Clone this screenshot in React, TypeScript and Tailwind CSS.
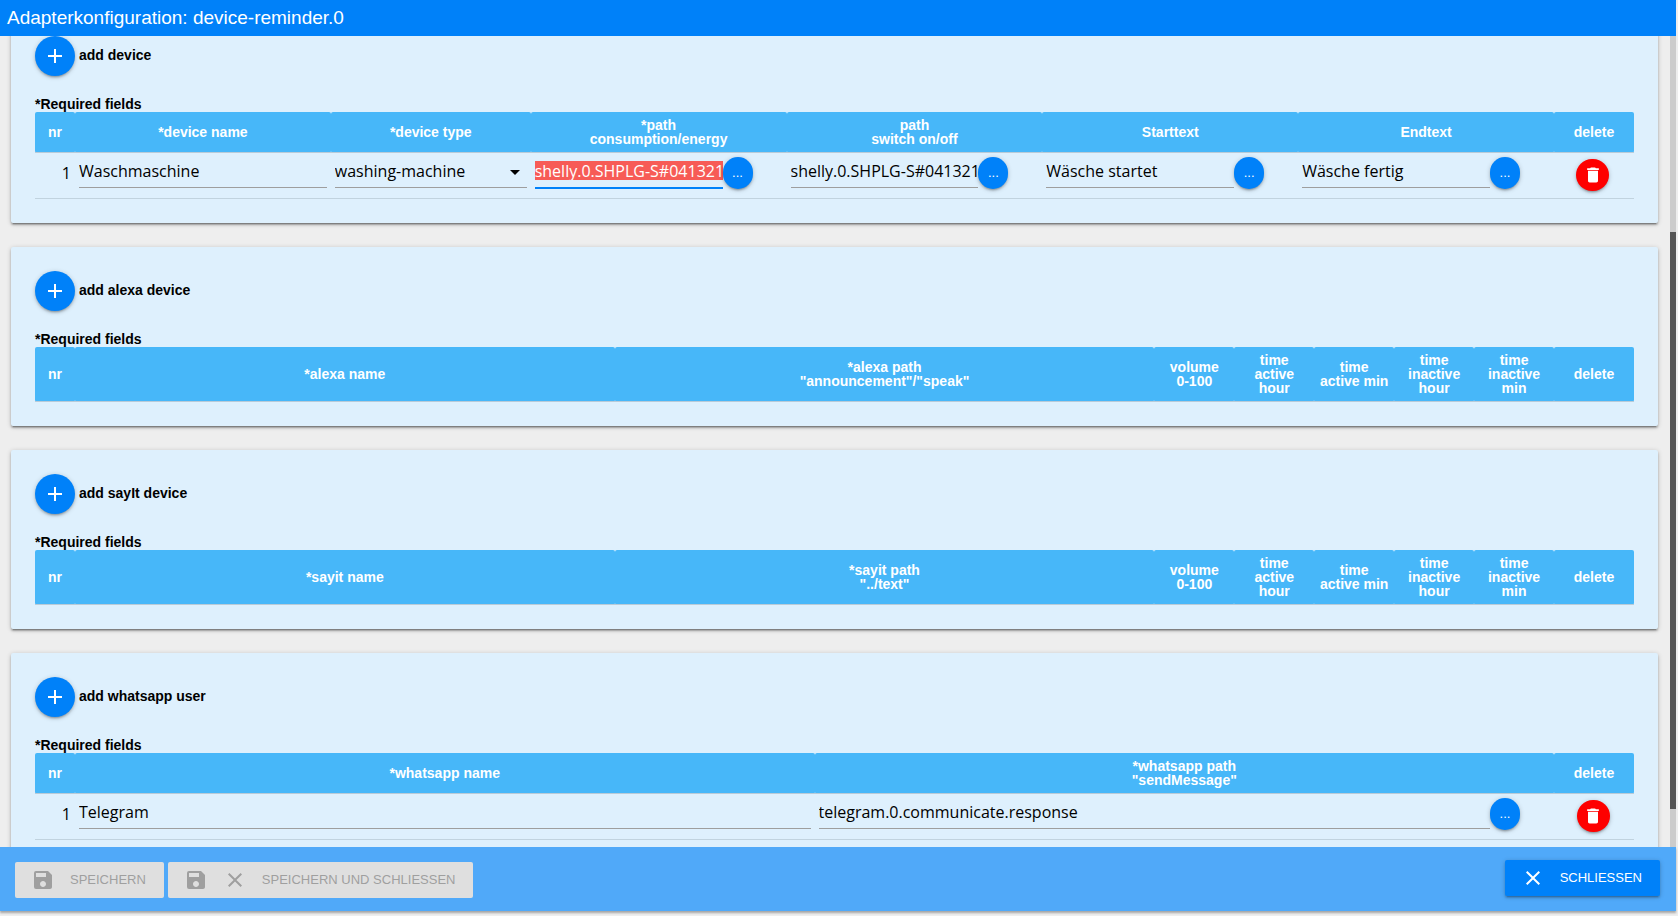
import React from 'react';
import { MdAdd, MdClose, MdDelete, MdSave, MdArrowDropDown } from 'react-icons/md';

interface Column {
    label: string[];
    width: string;
}

const NR: Column = { label: ['nr'], width: 'w-[2.5%]' };
const DELETE: Column = { label: ['delete'], width: 'w-[5%]' };

const TIME_COLUMNS: Column[] = [
    { label: ['volume', '0-100'], width: 'w-[5%]' },
    { label: ['time', 'active', 'hour'], width: 'w-[5%]' },
    { label: ['time', 'active min'], width: 'w-[5%]' },
    { label: ['time', 'inactive', 'hour'], width: 'w-[5%]' },
    { label: ['time', 'inactive', 'min'], width: 'w-[5%]' },
];

const deviceColumns: Column[] = [
    NR,
    { label: ['*device name'], width: 'w-[16%]' },
    { label: ['*device type'], width: 'w-[12.5%]' },
    { label: ['*path', 'consumption/energy'], width: 'w-[16%]' },
    { label: ['path', 'switch on/off'], width: 'w-[16%]' },
    { label: ['Starttext'], width: 'w-[16%]' },
    { label: ['Endtext'], width: 'w-[16%]' },
    DELETE,
];

const alexaColumns: Column[] = [
    NR,
    { label: ['*alexa name'], width: 'w-[33.75%]' },
    { label: ['*alexa path', '"announcement"/"speak"'], width: 'w-[33.75%]' },
    ...TIME_COLUMNS,
    DELETE,
];

const sayitColumns: Column[] = [
    NR,
    { label: ['*sayit name'], width: 'w-[33.75%]' },
    { label: ['*sayit path', '"../text"'], width: 'w-[33.75%]' },
    ...TIME_COLUMNS,
    DELETE,
];

const whatsappColumns: Column[] = [
    NR,
    { label: ['*whatsapp name'], width: 'w-[46.25%]' },
    { label: ['*whatsapp path', '"sendMessage"'], width: 'w-[46.25%]' },
    DELETE,
];

const fieldClass = 'h-8 border-b border-[#9e9e9e] bg-transparent pb-0.5 outline-none';
const buttonShadow = 'shadow-[0_2px_2px_0_rgba(0,0,0,0.14),0_3px_1px_-2px_rgba(0,0,0,0.12),0_1px_5px_0_rgba(0,0,0,0.2)]';

const Section: React.FC<{ title: string; columns: Column[]; children?: React.ReactNode }> = ({ title, columns, children }) => (
    <section className="rounded-xs bg-[#def0fd] p-6 shadow-[0_2px_2px_0_rgba(0,0,0,0.24),0_3px_1px_-2px_rgba(0,0,0,0.22),0_1px_5px_0_rgba(0,0,0,0.2)]">
        <div className="flex items-center gap-1">
            <button type="button" aria-label={title} className={`flex size-10 items-center justify-center rounded-full bg-[#0081f9] text-white ${buttonShadow}`}>
                <MdAdd size={24} />
            </button>
            <span className="pb-0.5 text-sm font-bold">{title}</span>
        </div>
        <p className="pt-5 text-sm/4 font-bold">*Required fields</p>
        <table className="w-full table-fixed border-collapse">
            <thead>
                <tr className="border-b border-[#b9cbd8]">
                    {columns.map(col => (
                        <th key={col.label.join(' ')} className={`${col.width} rounded-xs bg-[#47b7f9] py-1.5 text-sm/[14px] font-bold text-white`}>
                            {col.label.map(line => (
                                <span key={line} className="block whitespace-nowrap">{line}</span>
                            ))}
                        </th>
                    ))}
                </tr>
            </thead>
            {children && <tbody>{children}</tbody>}
        </table>
    </section>
);

const Row: React.FC<{ nr: number; children: React.ReactNode }> = ({ nr, children }) => (
    <tr className="h-[46px] border-b border-[#c1d3df] align-top font-['Open_Sans',sans-serif] text-base">
        <td className="px-1 pt-2 text-right">{nr}</td>
        {children}
        <td className="pt-1.5 pr-1.5 pl-1">
            <button type="button" aria-label="delete" className={`mx-auto flex h-8 w-[33px] items-center justify-center rounded-full bg-[#fe0000] text-white ${buttonShadow}`}>
                <MdDelete size={20} />
            </button>
        </td>
    </tr>
);

const TextCell: React.FC<{ label: string; value: string }> = ({ label, value }) => (
    <td className="px-1 pt-[3px]">
        <input type="text" aria-label={label} defaultValue={value} className={`block w-full ${fieldClass}`} />
    </td>
);

const PickerCell: React.FC<{ label: string; value: string; active?: boolean }> = ({ label, value, active }) => (
    <td className="px-1 pt-[3px]">
        <div className="flex">
            {active ? (
                <div className="flex h-[33px] w-[calc(100%-60px)] items-center border-b-2 border-[#0081f9] pb-0.5">
                    <input type="text" aria-label={label} defaultValue={value} className="h-[19px] w-full bg-[#f75b56] text-white outline-none" />
                </div>
            ) : (
                <input type="text" aria-label={label} defaultValue={value} className={`w-[calc(100%-60px)] ${fieldClass}`} />
            )}
            <button type="button" aria-label={`${label} auswählen`} className={`mt-px h-8 w-[30px] rounded-full bg-[#0081f9] font-['Liberation_Sans',sans-serif] text-[13px] text-white ${buttonShadow}`}>
                ...
            </button>
        </div>
    </td>
);

const App: React.FC = () => (
    <div className="flex h-screen flex-col overflow-hidden bg-[#eeeeee] font-['Liberation_Sans',Arial,sans-serif] text-black">
        <header className="mr-0.5 flex h-9 shrink-0 items-center bg-[#0081f9] px-[7px]">
            <h1 className="text-[19px] text-white">Adapterkonfiguration: device-reminder.0</h1>
        </header>

        <div className="flex min-h-0 flex-1">
            <main className="min-w-0 flex-1 overflow-hidden pr-3 pl-[11px]">
                <div className="-mt-6 flex flex-col gap-6">
                    <Section title="add device" columns={deviceColumns}>
                        <Row nr={1}>
                            <TextCell label="device name" value="Waschmaschine" />
                            <td className="px-1 pt-[3px]">
                                <div className="relative">
                                    <select aria-label="device type" className={`block w-full appearance-none ${fieldClass}`}>
                                        <option>washing-machine</option>
                                    </select>
                                    <MdArrowDropDown size={24} className="pointer-events-none absolute top-1 right-0" />
                                </div>
                            </td>
                            <PickerCell label="path consumption" value="shelly.0.SHPLG-S#041321#1.Relay0.Power" active />
                            <PickerCell label="path switch" value="shelly.0.SHPLG-S#041321#1.Relay0.Switch" />
                            <PickerCell label="Starttext" value="Wäsche startet" />
                            <PickerCell label="Endtext" value="Wäsche fertig" />
                        </Row>
                    </Section>

                    <Section title="add alexa device" columns={alexaColumns} />

                    <Section title="add sayIt device" columns={sayitColumns} />

                    <Section title="add whatsapp user" columns={whatsappColumns}>
                        <Row nr={1}>
                            <TextCell label="whatsapp name" value="Telegram" />
                            <PickerCell label="whatsapp path" value="telegram.0.communicate.response" />
                        </Row>
                    </Section>
                </div>
            </main>

            {/* Scroll track */}
            <div className="mr-0.5 flex w-1.5 flex-col bg-[#cccccc]">
                <div className="mt-[196px] mb-[38px] flex-1 bg-[#555555]" />
            </div>
        </div>

        <footer className="mr-0.5 mb-[5px] flex h-16 shrink-0 items-start justify-between bg-[#50a9f9] pr-4 pl-[15px] text-[13px] shadow-[0_2px_2px_0_rgba(0,0,0,0.3)]">
            <div className="flex gap-1 pt-[15px]">
                <button type="button" disabled className="flex h-9 items-center rounded-xs bg-[#dfdfdf] pr-[18px] pl-4 text-[#9f9f9f]">
                    <MdSave size={24} className="mr-[15px]" />
                    SPEICHERN
                </button>
                <button type="button" disabled className="flex h-9 items-center rounded-xs bg-[#dfdfdf] pr-[18px] pl-4 text-[#9f9f9f]">
                    <MdSave size={24} className="mr-[15px]" />
                    <MdClose size={24} className="mr-[15px]" />
                    SPEICHERN UND SCHLIESSEN
                </button>
            </div>
            <button type="button" className={`mt-[13px] flex h-9 items-center rounded-xs bg-[#0081f9] pr-[18px] pl-4 text-white ${buttonShadow}`}>
                <MdClose size={24} className="mr-[15px]" />
                SCHLIESSEN
            </button>
        </footer>
    </div>
);

export default App;
